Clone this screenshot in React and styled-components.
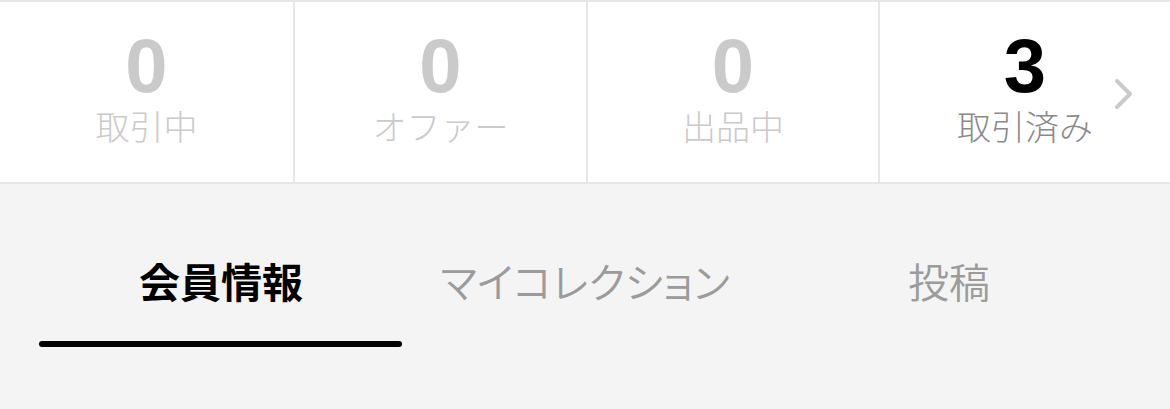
import React from "react";
import styled, { createGlobalStyle } from "styled-components";

const Global = createGlobalStyle`
  html, body { margin: 0; padding: 0; background: #f4f4f4; }
  body { font-family: "Noto Sans CJK JP", "Noto Sans", sans-serif; }
  #root { min-height: 409px; }
`;

const Page = styled.div`
  width: 1170px;
  height: 409px;
  display: flex;
  flex-direction: column;
  background: #f4f4f4;
  overflow: hidden;
`;

const StatsRow = styled.div`
  display: grid;
  grid-template-columns: 293px 291px 290px 1fr;
  column-gap: 2px;
  background: #e6e6e6;
  padding: 2px 0;
`;

const StatCell = styled.div`
  position: relative;
  background: #ffffff;
  height: 180px;
  display: flex;
  flex-direction: column;
  align-items: center;
  box-sizing: border-box;
  padding-top: 26px;
`;

const StatNumber = styled.div`
  font-family: "Liberation Sans", Arial, sans-serif;
  font-weight: 700;
  font-size: 76px;
  line-height: 76px;
  color: ${(p) => (p.$active ? "#000000" : "#cacaca")};
`;

const StatLabel = styled.div`
  margin-top: 5px;
  font-family: "Noto Sans CJK JP Light", "Noto Sans CJK JP DemiLight", "Noto Sans CJK JP", sans-serif;
  font-weight: 200;
  font-size: 34px;
  line-height: 34px;
  color: ${(p) => (p.$active ? "#8a8a8a" : "#cacaca")};
`;

const Chevron = styled.svg`
  position: absolute;
  right: 35px;
  top: 76px;
  width: 22px;
  height: 32px;
`;

const TabBar = styled.div`
  flex: 1;
  display: grid;
  grid-template-columns: repeat(3, 1fr);
  padding: 0 39px;
`;

const Tab = styled.div`
  display: flex;
  flex-direction: column;
  align-items: center;
  padding-top: 75px;
`;

const TabText = styled.div`
  font-family: ${(p) =>
    p.$active
      ? `"Noto Sans CJK JP", sans-serif`
      : `"Noto Sans CJK JP DemiLight", "Noto Sans CJK JP", sans-serif`};
  font-size: 41px;
  line-height: 42px;
  font-feature-settings: "palt";
  font-weight: ${(p) => (p.$active ? 700 : 350)};
  color: ${(p) => (p.$active ? "#000000" : "#9b9b9b")};
`;

const Indicator = styled.div`
  align-self: stretch;
  margin: 40px 1px 0 0;
  height: 6px;
  border-radius: 3px;
  background: ${(p) => (p.$active ? "#000000" : "transparent")};
`;

const stats = [
  { n: "0", label: "取引中" },
  { n: "0", label: "オファー" },
  { n: "0", label: "出品中" },
  { n: "3", label: "取引済み", active: true, link: true },
];

const tabs = [
  { label: "会員情報", active: true },
  { label: "マイコレクション" },
  { label: "投稿" },
];

export default function App() {
  return (
    <Page>
      <Global />
      <StatsRow>
        {stats.map((s, i) => (
          <StatCell key={i}>
            <StatNumber $active={s.active}>{s.n}</StatNumber>
            <StatLabel $active={s.active}>{s.label}</StatLabel>
            {s.link && (
              <Chevron viewBox="0 0 22 32">
                <path
                  d="M4 3 L17 16 L4 29"
                  fill="none"
                  stroke="#cacaca"
                  strokeWidth="4"
                  strokeLinecap="round"
                  strokeLinejoin="round"
                />
              </Chevron>
            )}
          </StatCell>
        ))}
      </StatsRow>
      <TabBar>
        {tabs.map((t, i) => (
          <Tab key={i}>
            <TabText $active={t.active}>{t.label}</TabText>
            <Indicator $active={t.active} />
          </Tab>
        ))}
      </TabBar>
    </Page>
  );
}
